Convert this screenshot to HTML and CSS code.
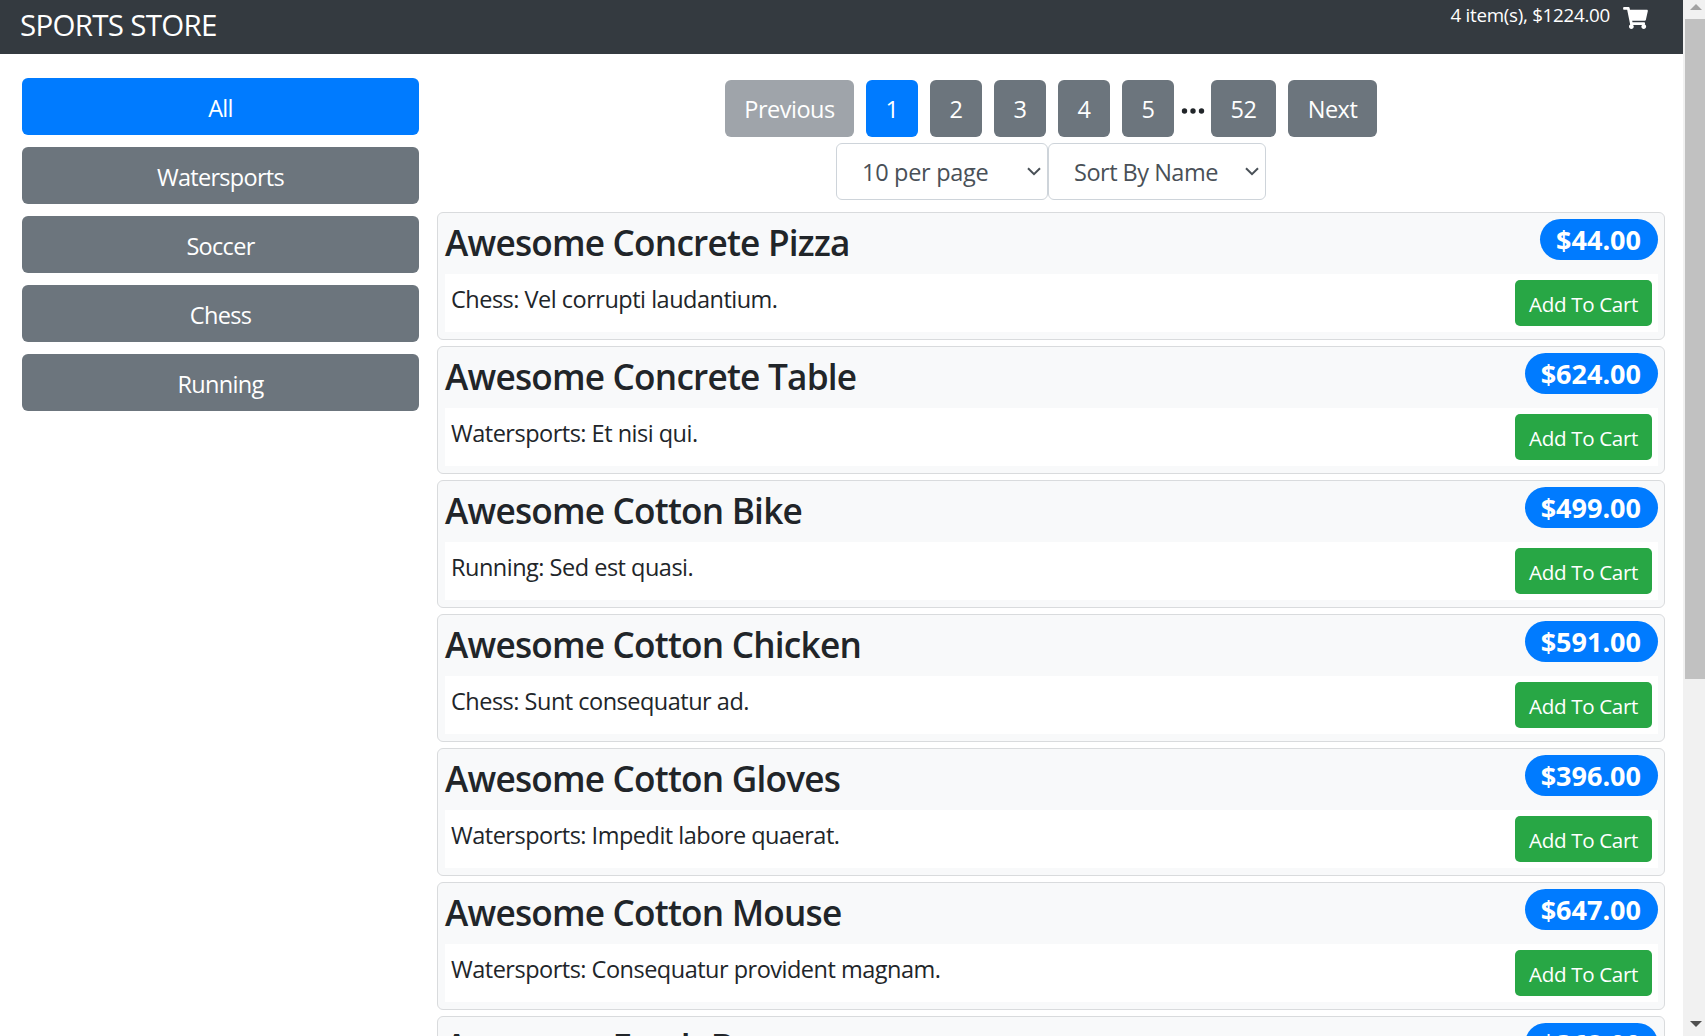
FILE: index.html
```html
<!DOCTYPE html>
<html lang="en">
<head>
<meta charset="utf-8">
<title>Sports Store</title>
<link rel="stylesheet" href="styles.css">
</head>
<body>
<div class="page">
  <header class="navbar">
    <div class="brand">SPORTS STORE</div>
    <div class="cart">
      <span class="cart-text">4 item(s), $1224.00</span>
      <svg class="cart-icon" viewBox="0 0 576 512"><path fill="#fff" d="M528.12 301.319l47.273-208C578.806 78.301 567.391 64 551.99 64H159.208l-9.166-44.81C147.758 8.021 137.93 0 126.529 0H24C10.745 0 0 10.745 0 24v16c0 13.255 10.745 24 24 24h69.883l70.248 343.435C147.325 417.1 136 435.222 136 456c0 30.928 25.072 56 56 56s56-25.072 56-56c0-15.674-6.447-29.835-16.824-40h209.647C430.447 426.165 424 440.326 424 456c0 30.928 25.072 56 56 56s56-25.072 56-56c0-22.172-12.888-41.332-31.579-50.405l5.517-24.276c3.413-15.018-8.002-29.319-23.403-29.319H218.117l-6.545-32h293.145c11.206 0 20.92-7.754 23.403-18.681z"/></svg>
    </div>
  </header>
  <div class="columns">
    <nav class="categories">
      <a class="btn active">All</a>
      <a class="btn">Watersports</a>
      <a class="btn">Soccer</a>
      <a class="btn">Chess</a>
      <a class="btn">Running</a>
    </nav>
    <main class="content">
      <div class="pagination">
        <a class="btn previous">Previous</a>
        <a class="btn number active">1</a>
        <a class="btn number">2</a>
        <a class="btn number">3</a>
        <a class="btn number">4</a>
        <a class="btn number">5</a>
        <svg class="dots" viewBox="0 0 24 8" fill="#212529"><circle cx="3.5" cy="4" r="2.7"/><circle cx="12" cy="4" r="2.7"/><circle cx="20.5" cy="4" r="2.7"/></svg>
        <a class="btn last">52</a>
        <a class="btn next">Next</a>
      </div>
      <div class="filters">
        <div class="select per-page"><span>10 per page</span><svg class="chevron" viewBox="0 0 14 9"><path d="M1 1.2l6 6 6-6"/></svg></div>
        <div class="select sort"><span>Sort By Name</span><svg class="chevron" viewBox="0 0 14 9"><path d="M1 1.2l6 6 6-6"/></svg></div>
      </div>
      <section class="products">
        <article class="card">
          <div class="card-head"><h4>Awesome Concrete Pizza</h4><span class="price">$44.00</span></div>
          <div class="card-body"><p>Chess: Vel corrupti laudantium.</p><a class="add">Add To Cart</a></div>
        </article>
        <article class="card">
          <div class="card-head"><h4>Awesome Concrete Table</h4><span class="price">$624.00</span></div>
          <div class="card-body"><p>Watersports: Et nisi qui.</p><a class="add">Add To Cart</a></div>
        </article>
        <article class="card">
          <div class="card-head"><h4>Awesome Cotton Bike</h4><span class="price">$499.00</span></div>
          <div class="card-body"><p>Running: Sed est quasi.</p><a class="add">Add To Cart</a></div>
        </article>
        <article class="card">
          <div class="card-head"><h4>Awesome Cotton Chicken</h4><span class="price">$591.00</span></div>
          <div class="card-body"><p>Chess: Sunt consequatur ad.</p><a class="add">Add To Cart</a></div>
        </article>
        <article class="card">
          <div class="card-head"><h4>Awesome Cotton Gloves</h4><span class="price">$396.00</span></div>
          <div class="card-body"><p>Watersports: Impedit labore quaerat.</p><a class="add">Add To Cart</a></div>
        </article>
        <article class="card">
          <div class="card-head"><h4>Awesome Cotton Mouse</h4><span class="price">$647.00</span></div>
          <div class="card-body"><p>Watersports: Consequatur provident magnam.</p><a class="add">Add To Cart</a></div>
        </article>
        <article class="card">
          <div class="card-head"><h4>Awesome Fresh Bacon</h4><span class="price">$368.00</span></div>
        </article>
      </section>
    </main>
  </div>
</div>
<div class="scrollbar">
  <svg class="arrow" viewBox="0 0 12 6"><path fill="#a3a3a3" d="M0 6L6 0l6 6z"/></svg>
  <div class="thumb"></div>
  <svg class="arrow down" viewBox="0 0 12 6"><path fill="#505050" d="M0 0l6 6 6-6z"/></svg>
</div>
</body>
</html>
```
FILE: styles.css
```css
* { box-sizing: border-box; }

body {
  margin: 0;
  height: 1036px;
  display: flex;
  overflow: hidden;
  background: #fff;
  color: #212529;
  font: 23.5px/36px "Open Sans", "Noto Sans", sans-serif;
  letter-spacing: -0.5px;
}

h4, p { margin: 0; }

.page { width: 1683px; height: 1036px; overflow: hidden; }

.navbar {
  height: 54px;
  padding: 0 35px 0 20px;
  display: flex;
  justify-content: space-between;
  background: #343a40;
  color: #fff;
}
.brand { font-size: 29.5px; line-height: 49px; letter-spacing: -0.7px; }
.cart { display: flex; gap: 13px; }
.cart-text { font-size: 18.8px; line-height: 30px; letter-spacing: -0.28px; }
.cart-icon { width: 25px; height: 22px; margin-top: 7px; }

.columns { display: flex; gap: 18px; padding: 24px 18px 0 22px; }
.categories { width: 397px; display: flex; flex-direction: column; gap: 12px; }
.content { width: 1228px; padding-top: 2px; }

.btn {
  height: 57px;
  border-radius: 6px;
  background: #6c757d;
  color: #fff;
  text-align: center;
  line-height: 59px;
}
.categories .btn { line-height: 60px; letter-spacing: -0.7px; }
.btn.active { background: #007bff; }

.pagination { display: flex; justify-content: center; gap: 12px; }
.previous { width: 129px; opacity: .65; }
.number { width: 52px; }
.last { width: 65px; }
.next { width: 89px; }
.dots { width: 24px; height: 8px; margin: 27px -6px 0 -5px; }

.filters { display: flex; justify-content: center; gap: 0; margin: 6px 0 12px; }
.select {
  height: 57px;
  padding: 0 6px 0 25px;
  display: flex;
  align-items: center;
  justify-content: space-between;
  border: 1px solid #ced4da;
  border-radius: 6px;
  color: #495057;
}
.per-page { width: 212px; letter-spacing: -0.3px; }
.sort { width: 218px; }
.chevron { width: 14px; height: 9px; margin-bottom: 1px; fill: none; stroke: #495057; stroke-width: 2; }

.products { display: flex; flex-direction: column; gap: 6px; }
.card {
  height: 128px;
  padding: 6px 6px 7px 7px;
  border: 1px solid #d9dbdd;
  border-radius: 6px;
  background: #f8f9fa;
}
.card-head { height: 55px; display: flex; justify-content: space-between; }
.card-head h4 { font-size: 35.2px; line-height: 46px; font-weight: 600; letter-spacing: -0.78px; }
.price {
  height: 41px;
  padding: 0 17px 0 16px;
  border-radius: 21px;
  background: #007bff;
  color: #fff;
  font-size: 27px;
  font-weight: 700;
  line-height: 41px;
  letter-spacing: 0;
}
.card-body {
  height: 58px;
  padding: 6px;
  display: flex;
  justify-content: space-between;
  background: #fff;
}
.card-body p { line-height: 38px; }
.add {
  width: 137px;
  height: 46px;
  border-radius: 5px;
  background: #28a745;
  color: #fff;
  font-size: 20.6px;
  line-height: 48px;
  letter-spacing: -0.35px;
  text-align: center;
}

.scrollbar {
  width: 22px;
  height: 1036px;
  padding: 4px 0 9px 2px;
  display: flex;
  flex-direction: column;
  background: #f1f1f1;
}
.arrow { width: 12px; height: 6px; margin-left: 5px; }
.thumb { height: 660px; margin-top: 9px; background: #c1c1c1; }
.down { margin-top: auto; }
```
